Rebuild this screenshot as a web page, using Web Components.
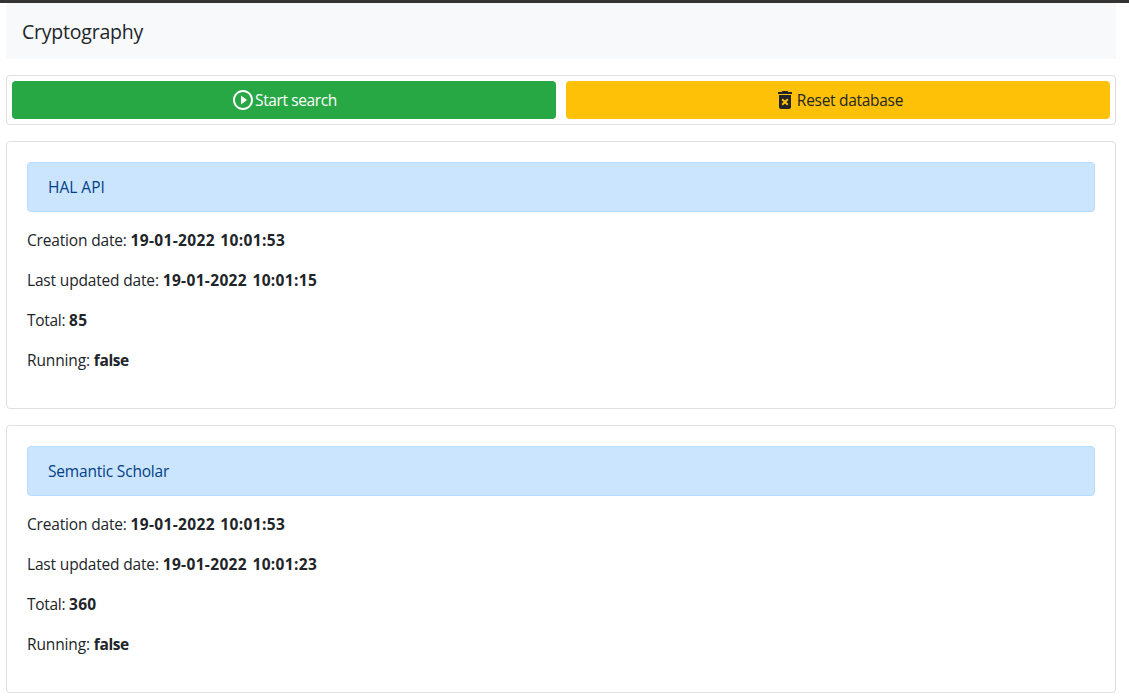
<!DOCTYPE html>
<html lang="en">
<head>
<meta charset="utf-8">
<title>Cryptography</title>
<style>
html,body{margin:0;background:#fff}
body{font:370 15.5px/24px "Open Sans","Noto Sans",sans-serif;color:#212529}
</style>
</head>
<body>
<search-page>
  <page-header>Cryptography</page-header>
  <tool-bar>
    <action-button kind="success">
      <svg slot="icon" width="24" height="24" viewBox="0 0 24 24" fill="currentColor"><path d="M12 2C6.480 2 2 6.480 2 12s4.480 10 10 10 10-4.480 10-10S17.520 2 12 2zm0 18c-4.410 0-8-3.590-8-8s3.590-8 8-8 8 3.590 8 8-3.590 8-8 8zM10 16.500l6-4.500-6-4.500z"/></svg>
      <span>Start search</span>
    </action-button>
    <action-button kind="warning">
      <svg slot="icon" width="24" height="24" viewBox="0 0 24 24" fill="currentColor"><path fill-rule="evenodd" d="M6 19c0 1.100.9 2 2 2h8c1.100 0 2-.9 2-2V7H6zM8.460 11.880l1.410-1.410L12 12.590l2.120-2.120 1.410 1.410L13.410 14l2.120 2.120-1.410 1.410L12 15.410l-2.120 2.120-1.410-1.410L10.590 14zM15.500 4l-1-1h-5l-1 1H5v2h14V4z"/></svg>
      <span>Reset database</span>
    </action-button>
  </tool-bar>
  <source-card heading="HAL API" created="19-01-2022 10:01:53" updated="19-01-2022 10:01:15" total="85" running="false"></source-card>
  <source-card heading="Semantic Scholar" style="--heading-spacing:-.19px" created="19-01-2022 10:01:53" updated="19-01-2022 10:01:23" total="360" running="false"></source-card>
</search-page>
<script>
const define=(name,html,setup)=>customElements.define(name,class extends HTMLElement{
  constructor(){super();this.attachShadow({mode:'open'}).innerHTML=html;}
  connectedCallback(){if(setup)setup(this);}
});
define('search-page',`<style>
:host{display:flex;flex-direction:column;gap:16px;box-sizing:border-box;height:700px;border-top:3px solid #343434;padding:0 13px 0 6px;overflow:hidden}
</style><slot></slot>`);
define('page-header',`<style>
:host{display:flex;align-items:center;box-sizing:border-box;flex:0 0 56px;padding:2px 16px 0;background:#f8f9fa;font-size:19.5px;letter-spacing:-.22px}
</style><slot></slot>`);
define('tool-bar',`<style>
:host{display:grid;grid-template-columns:1fr 1fr;gap:10px;box-sizing:border-box;flex:0 0 50px;padding:5px;border:1px solid #dfdfdf;border-radius:4px}
</style><slot></slot>`);
define('action-button',`<style>
:host{display:flex;align-items:center;justify-content:center;border-radius:4px;letter-spacing:-.29px}
:host([kind=success]){background:#28a745;color:#fff;letter-spacing:-.38px}
:host([kind=warning]){background:#ffc107;color:#212529}
</style><slot name="icon"></slot><slot></slot>`);
define('source-card',`<style>
:host{display:block;box-sizing:border-box;flex:0 0 268px;padding:20px;border:1px solid #dfdfdf;border-radius:4px}
.alert{box-sizing:border-box;height:50px;padding:12px 20px;border:1px solid #b8daff;border-radius:4px;background:#cce5ff;color:#004085;margin-bottom:16px;letter-spacing:var(--heading-spacing,0)}
p{margin:0 0 16px;letter-spacing:-.17px}
strong{font-weight:700;letter-spacing:.35px;word-spacing:1px}
.total{letter-spacing:-.3px}
.running{letter-spacing:-.13px}
.running strong{letter-spacing:-.4px}
</style>
<div class="alert"></div>
<p>Creation date: <strong data-k="created"></strong></p>
<p>Last updated date: <strong data-k="updated"></strong></p>
<p class="total">Total: <strong data-k="total"></strong></p>
<p class="running">Running: <strong data-k="running"></strong></p>`,
el=>{const r=el.shadowRoot;
  r.querySelector('.alert').textContent=el.getAttribute('heading');
  r.querySelectorAll('[data-k]').forEach(s=>{s.textContent=el.getAttribute(s.dataset.k);});
});
</script>
</body>
</html>
